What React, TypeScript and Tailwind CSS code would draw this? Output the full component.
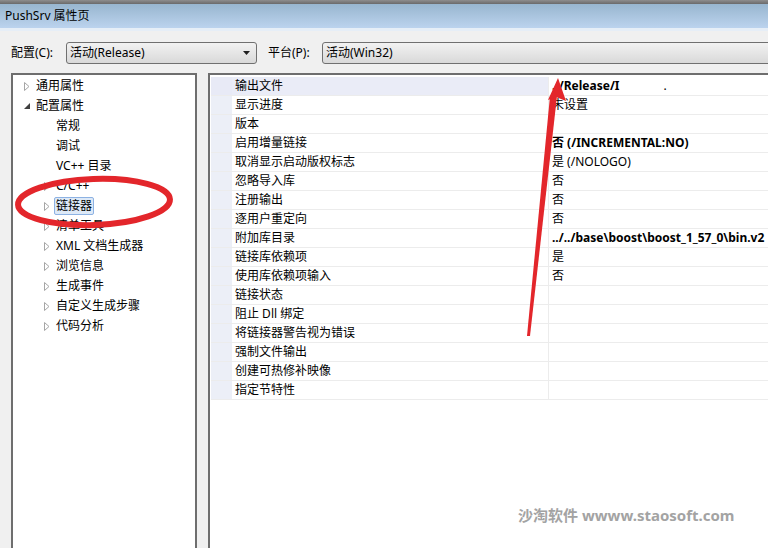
import React from "react";

const font = "font-['Noto_Sans','Noto_Sans_CJK_SC',sans-serif]";

type TreeItem = { label: string; depth: 0 | 1; arrow: "closed" | "open" | "none"; selected?: boolean };

const tree: TreeItem[] = [
  { label: "通用属性", depth: 0, arrow: "closed" },
  { label: "配置属性", depth: 0, arrow: "open" },
  { label: "常规", depth: 1, arrow: "none" },
  { label: "调试", depth: 1, arrow: "none" },
  { label: "VC++ 目录", depth: 1, arrow: "none" },
  { label: "C/C++", depth: 1, arrow: "closed" },
  { label: "链接器", depth: 1, arrow: "closed", selected: true },
  { label: "清单工具", depth: 1, arrow: "closed" },
  { label: "XML 文档生成器", depth: 1, arrow: "closed" },
  { label: "浏览信息", depth: 1, arrow: "closed" },
  { label: "生成事件", depth: 1, arrow: "closed" },
  { label: "自定义生成步骤", depth: 1, arrow: "closed" },
  { label: "代码分析", depth: 1, arrow: "closed" },
];

const props: { name: string; value?: string; bold?: boolean }[] = [
  { name: "输出文件", value: "../Release/I", bold: true },
  { name: "显示进度", value: "未设置" },
  { name: "版本" },
  { name: "启用增量链接", value: "否 (/INCREMENTAL:NO)", bold: true },
  { name: "取消显示启动版权标志", value: "是 (/NOLOGO)" },
  { name: "忽略导入库", value: "否" },
  { name: "注册输出", value: "否" },
  { name: "逐用户重定向", value: "否" },
  { name: "附加库目录", value: "../../base\\boost\\boost_1_57_0\\bin.v2", bold: true },
  { name: "链接库依赖项", value: "是" },
  { name: "使用库依赖项输入", value: "否" },
  { name: "链接状态" },
  { name: "阻止 Dll 绑定" },
  { name: "将链接器警告视为错误" },
  { name: "强制文件输出" },
  { name: "创建可热修补映像" },
  { name: "指定节特性" },
];

function Arrow({ kind }: { kind: TreeItem["arrow"] }) {
  if (kind === "none") return <span className="w-[12px] shrink-0" />;
  return (
    <span className="flex w-[12px] shrink-0 items-center justify-start">
      {kind === "closed" ? (
        <svg width="6" height="9" viewBox="0 0 6 9">
          <path d="M0.5 0.5 L5 4.5 L0.5 8.5 Z" fill="#fff" stroke="#a6a6a6" />
        </svg>
      ) : (
        <svg width="6" height="6" viewBox="0 0 6 6">
          <path d="M6 0 L6 6 L0 6 Z" fill="#404040" />
        </svg>
      )}
    </span>
  );
}

function Combo({ text, className, dropdown }: { text: string; className: string; dropdown?: boolean }) {
  return (
    <div
      className={`flex h-[22px] shrink-0 items-center rounded-[3px] border border-[#707070] bg-gradient-to-b from-[#f2f2f2] to-[#d9d9d9] pl-[3px] pr-[6px] ${className}`}
    >
      <span className="flex-1 text-[12px] text-black">{text}</span>
      {dropdown && (
        <svg width="7" height="4" viewBox="0 0 7 4">
          <path d="M0 0 L7 0 L3.5 4 Z" fill="#202020" />
        </svg>
      )}
    </div>
  );
}

export default function App() {
  return (
    <div className={`relative h-[548px] w-[768px] overflow-hidden bg-[#f0f0f0] ${font}`}>
      <div className="h-[4px] bg-gradient-to-b from-[#8e8e8e] to-[#6a6a6a]" />
      <div className="flex h-[24px] items-center bg-gradient-to-b from-[#98b6cf] to-[#bcd3ee] px-[5px] text-[12px] text-black">
        PushSrv 属性页
      </div>
      <div className="h-[3px] bg-[#e6eef7]" />

      <div className="flex items-center pl-[11px] pt-[11px]">
        <span className="w-[55px] shrink-0 text-[12px] text-black">配置(C):</span>
        <Combo text="活动(Release)" className="w-[191px]" dropdown />
        <span className="ml-[11px] w-[54px] shrink-0 text-[12px] text-black">平台(P):</span>
        <Combo text="活动(Win32)" className="w-[470px] from-[#e6e6e6] to-[#cfcfcf]" />
      </div>

      <div className="mt-[9px] flex h-[480px]">
        <div className="ml-[11px] w-[186px] shrink-0 border-x-2 border-t-2 border-[#6e6e6e] bg-white pt-px">
          {tree.map((t) => (
            <div
              key={t.label}
              className={`flex h-[20px] items-center text-[12px] text-black ${t.depth === 0 ? "pl-[11px]" : "pl-[31px]"}`}
            >
              <Arrow kind={t.arrow} />
              <span
                className={
                  t.selected
                    ? "-ml-[2px] rounded-[2px] border border-[#8db2e3] bg-[#dde9f7] px-[1px] leading-[16px]"
                    : "leading-[16px]"
                }
              >
                {t.label}
              </span>
            </div>
          ))}
        </div>

        <div className="ml-[11px] w-[600px] shrink-0 border-l-2 border-t-2 border-[#6e6e6e] bg-white pl-px pt-[2px]">
          {props.map((p, i) => (
            <div key={p.name} className="flex h-[19px] border-b border-[#ececec] text-[12px] text-black">
              <div className={`w-[21px] shrink-0 ${i === 0 ? "bg-[#e8eaf6]" : "bg-[#eceff7]"}`} />
              <div
                className={`flex w-[317px] shrink-0 items-center border-r border-[#ececec] pl-[3px] ${i === 0 ? "bg-[#eaecf7]" : ""}`}
              >
                {p.name}
              </div>
              <div className={`flex flex-1 items-center whitespace-nowrap pl-[3px] ${p.bold ? "font-bold" : ""}`}>
                {p.value}
                {i === 0 && <span className="ml-[44px] font-normal">.</span>}
              </div>
            </div>
          ))}
        </div>
      </div>

      {/* red marker annotations drawn over the screenshot */}
      <svg className="pointer-events-none absolute left-0 top-0" width="768" height="548" viewBox="0 0 768 548">
        <ellipse
          cx="94"
          cy="202"
          rx="76"
          ry="23"
          fill="none"
          stroke="#e3262b"
          strokeWidth="6"
          transform="rotate(-2 94 202)"
        />
        <path d="M527 336 L530 336 L557 96 L550 96 Z" fill="#e3262b" />
        <path d="M558 78 L566 101 L556 97 L548 100 Z" fill="#e3262b" />
      </svg>

      <div className="absolute left-[518px] top-[504px] text-[15px] font-bold text-[#a3a3a3]">
        沙淘软件 wwww.staosoft.com
      </div>
    </div>
  );
}
